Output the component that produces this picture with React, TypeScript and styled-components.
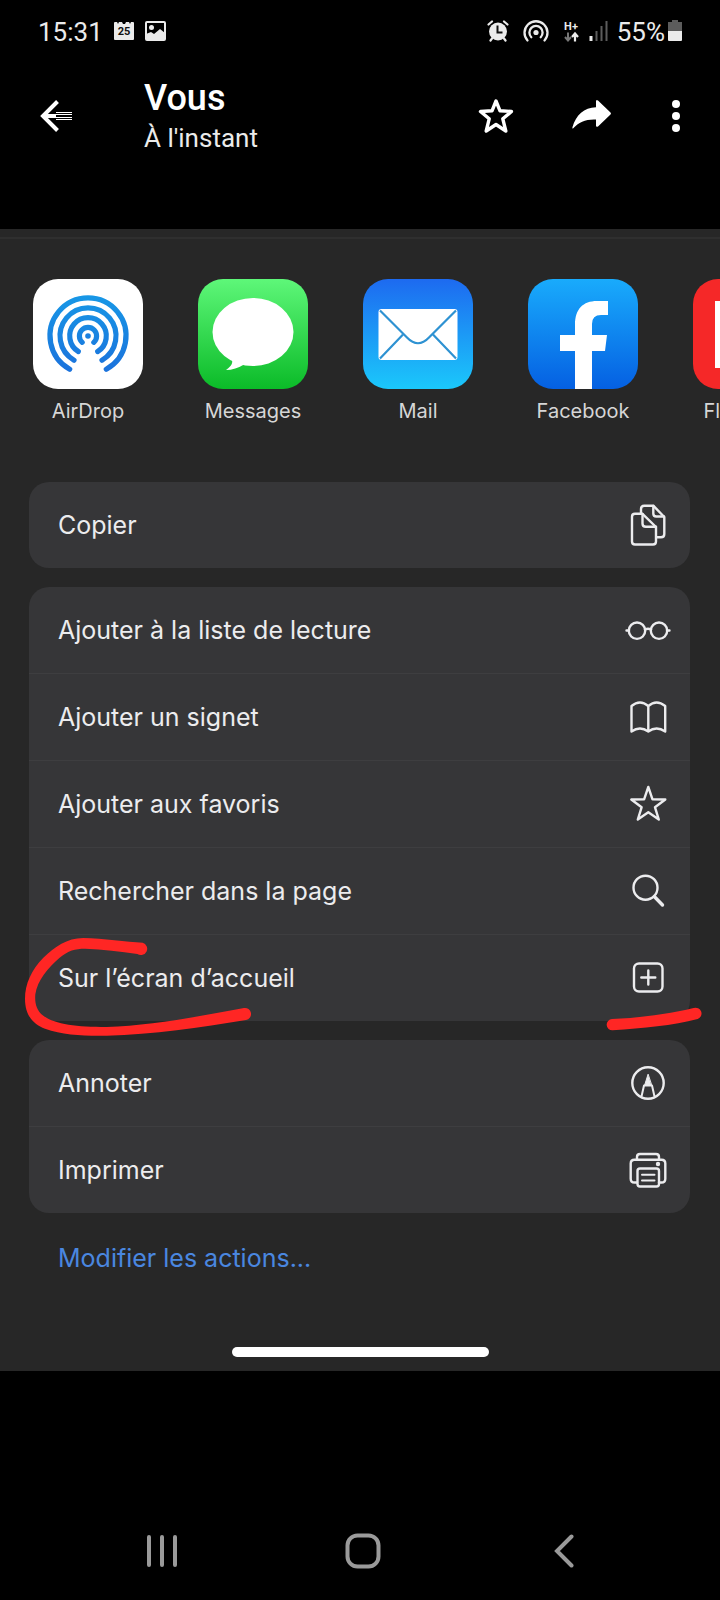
import React from "react";
import styled, { createGlobalStyle } from "styled-components";

const GlobalStyle = createGlobalStyle`
  *, *::before, *::after { box-sizing: border-box; }
  body { margin: 0; background: #000; }
  button { font: inherit; color: inherit; background: none; border: 0; padding: 0; cursor: pointer; }
`;

const RED = "#ff2624";

/* ---------- layout ---------- */

const Page = styled.div`
  display: flex;
  flex-direction: column;
  min-height: 100vh;
  overflow-x: hidden;
  background: #000;
  color: #fff;
  font-family: Roboto, "Liberation Sans", sans-serif;
`;

const StatusBar = styled.div`
  display: flex;
  align-items: center;
  justify-content: space-between;
  height: 62px;
  padding: 0 38px;
  color: #ebebeb;
  font-size: 26px;
  line-height: 32px;
`;

const StatusGroup = styled.div<{ $gap: number }>`
  display: flex;
  align-items: center;
  gap: ${(p) => p.$gap}px;
`;

const StatusText = styled.span`
  padding-top: 2px;
`;

const Header = styled.header`
  display: flex;
  align-items: center;
  padding: 14px 8px 73px 28px;
`;

const HeaderButton = styled.button<{ $width: number }>`
  display: flex;
  align-items: center;
  justify-content: center;
  width: ${(p) => p.$width}px;
  height: 56px;
`;

const Heading = styled.div`
  flex: 1;
  padding-left: 60px;
`;

const Title = styled.h1`
  margin: 0;
  font-size: 36px;
  font-weight: 500;
  line-height: 44px;
`;

const Subtitle = styled.p`
  margin: 0;
  color: #ebebeb;
  font-size: 26px;
  line-height: 36px;
`;

const Sheet = styled.main`
  padding: 8px 0 14px;
  background: #272727;
  color: #ececee;
  font-family: Inter, "Liberation Sans", sans-serif;
`;

const SheetDivider = styled.div`
  height: 2px;
  margin-bottom: 40px;
  background: #2f2f2f;
`;

const AppRow = styled.div`
  display: flex;
  gap: 55px;
  padding-left: 33px;
  overflow: hidden;
`;

const AppButton = styled.button`
  display: flex;
  flex: none;
  flex-direction: column;
  align-items: center;
  gap: 8px;
  width: 110px;
  color: #d6d6d6;
  font-size: 20px;
  line-height: 28px;
`;

const AppTile = styled.span<{ $fill: string }>`
  display: block;
  width: 110px;
  height: 110px;
  overflow: hidden;
  border-radius: 25px;
  background: ${(p) => p.$fill};

  svg { display: block; width: 100%; height: 100%; }
`;

const Groups = styled.div`
  display: flex;
  flex-direction: column;
  gap: 19px;
  margin: 57px 30px 0 29px;
`;

const Card = styled.ul`
  margin: 0;
  padding: 0;
  list-style: none;
  border-radius: 20px;
  background: #363638;
`;

const CardItem = styled.li`
  position: relative;

  & + & { border-top: 1px solid #3e3e40; }
`;

const ActionButton = styled.button`
  display: flex;
  align-items: center;
  justify-content: space-between;
  width: 100%;
  height: 86px;
  padding: 0 18px 0 29px;
  font-size: 25px;
  line-height: 32px;
  text-align: left;
`;

const EditLink = styled.a`
  display: flex;
  align-items: center;
  height: 90px;
  padding-left: 58px;
  color: #4a87e0;
  font-size: 25px;
  line-height: 32px;
  text-decoration: none;
`;

const HomeIndicator = styled.div`
  width: 257px;
  height: 10px;
  margin: 44px auto 0;
  border-radius: 5px;
  background: #fff;
`;

const NavBar = styled.nav`
  display: grid;
  grid-template-columns: repeat(3, 1fr);
  margin-top: auto;
  padding: 0 55px 0 61px;
`;

const NavButton = styled.button`
  display: flex;
  align-items: center;
  justify-content: center;
  height: 98px;
`;

const CircleMark = styled.svg`
  position: absolute;
  top: 2px;
  left: -5px;
  pointer-events: none;
`;

const UnderlineMark = styled.svg`
  position: absolute;
  right: -13px;
  bottom: -11px;
  pointer-events: none;
`;

/* ---------- status icons ---------- */

const CalendarIcon = () => (
  <svg width="20" height="20" viewBox="0 0 20 20">
    <path d="M1 1h2l1 2 1-2h3l1 2h2l1-2h3l1 2 1-2h2q1 0 1 1v16q0 1-1 1H1q-1 0-1-1V2q0-1 1-1Z" fill="#ebebeb" />
    <text x="10" y="14" textAnchor="middle" fontSize="11" fontWeight="700" fill="#111">25</text>
  </svg>
);

const PictureIcon = () => (
  <svg width="21" height="20" viewBox="0 0 21 20">
    <rect x="1" y="1" width="19" height="18" rx="1" fill="none" stroke="#ebebeb" strokeWidth="2" />
    <circle cx="6.500" cy="6.500" r="2.500" fill="#ebebeb" />
    <path d="M1 13l5-2 3 2 6-5 5 4v7H1Z" fill="#ebebeb" />
  </svg>
);

const AlarmIcon = () => (
  <svg width="22" height="22" viewBox="0 0 22 22">
    <circle cx="11" cy="11.500" r="9" fill="#ebebeb" />
    <path d="M1.500 4.500l3.500-3M20.500 4.500l-3.500-3M5 18.500l-1.500 2M17 18.500l1.500 2" stroke="#ebebeb" strokeWidth="2.200" strokeLinecap="round" />
    <path d="M10.500 5.500v7h5" fill="none" stroke="#111" strokeWidth="2" />
  </svg>
);

const HotspotIcon = () => (
  <svg width="26" height="24" viewBox="0 0 26 24" fill="none" stroke="#ebebeb" strokeWidth="2.300" strokeLinecap="round">
    <path d="M4.500 21.500A11.500 11.500 0 1 1 21.500 21.500" />
    <path d="M8.300 18.200A6.600 6.600 0 1 1 17.700 18.200" />
    <circle cx="13" cy="13.500" r="2.600" fill="#ebebeb" stroke="none" />
  </svg>
);

const DataIcon = () => (
  <svg width="17" height="26" viewBox="0 0 17 26">
    <text x="8" y="12" textAnchor="middle" fontSize="11" fontWeight="700" fill="#ebebeb">H+</text>
    <path d="M5 14.500v7M2 19l3 3.500L8 19" fill="none" stroke="#777" strokeWidth="2" />
    <path d="M12 23.500v-7M9 19l3-3.500 3 3.500" fill="none" stroke="#ebebeb" strokeWidth="2.200" />
  </svg>
);

const SignalIcon = () => (
  <svg width="19" height="20" viewBox="0 0 19 20">
    <path d="M2 15v5" stroke="#ebebeb" strokeWidth="3" />
    <path d="M7.500 10v10M12.500 5v15M17.500 0v20" stroke="#5c5c5c" strokeWidth="2" />
  </svg>
);

const BatteryIcon = () => (
  <svg width="14" height="22" viewBox="0 0 14 22">
    <path d="M4 0h6v2h4v9H0V2h4Z" fill="#5c5c5c" />
    <path d="M0 11h14v9q0 1-1 1H1q-1 0-1-1Z" fill="#ebebeb" />
  </svg>
);

/* ---------- header icons ---------- */

const BackIcon = () => (
  <svg width="32" height="32" viewBox="0 0 32 32">
    <path d="M17.500 1.500L3 16l14.500 14.500" fill="none" stroke="#fff" strokeWidth="4" />
    <path d="M2 16h14" stroke="#fff" strokeWidth="4" />
    <path d="M16 12.500h16M16 14.500h16M16 17.500h16M16 19.500h16" stroke="#fff" />
  </svg>
);

const HeaderStarIcon = () => (
  <svg width="36" height="38" viewBox="0 0 36 38">
    <path
      d="M18 4L22 13.800L33.500 14.500L24.800 21.800L27.800 34L18 27.500L8.200 34L11.200 21.800L2.500 14.500L14 13.800Z"
      fill="none" stroke="#fff" strokeWidth="3.400" strokeLinejoin="round"
    />
  </svg>
);

const ShareIcon = () => (
  <svg width="40" height="34" viewBox="0 0 40 34">
    <path
      d="M24 2.500Q24 0 26 1.500L38.500 13.500Q39.500 14.500 38.500 15.500L26 27.500Q24 28.500 24 26.500V20.500C14 20 7 23 1 29.500Q0 30 .5 28C4 16 12 8.500 24 8.200Z"
      fill="#fff"
    />
  </svg>
);

const MoreIcon = () => (
  <svg width="8" height="32" viewBox="0 0 8 32" fill="#fff">
    <circle cx="4" cy="4" r="4" />
    <circle cx="4" cy="16" r="4" />
    <circle cx="4" cy="28" r="4" />
  </svg>
);

/* ---------- app logos ---------- */

const AirDropLogo = () => (
  <svg viewBox="0 0 110 110">
    <defs>
      <linearGradient id="airdrop" gradientUnits="userSpaceOnUse" x1="0" y1="17" x2="0" y2="92">
        <stop offset="0" stopColor="#1797e6" />
        <stop offset="1" stopColor="#1b72dc" />
      </linearGradient>
    </defs>
    <g fill="none" stroke="url(#airdrop)" strokeWidth="5.200" strokeLinecap="round">
      <path d="M36.700 90.200A38 38 0 1 1 73.300 90.200" />
      <path d="M41 81.200A28 28 0 1 1 69 81.200" />
      <path d="M45.300 72.500A18.300 18.300 0 1 1 64.700 72.500" />
      <path d="M49.200 63.300A8.600 8.600 0 1 1 60.800 63.300" />
    </g>
    <circle cx="55" cy="57" r="2.800" fill="#1b80e0" />
  </svg>
);

const MessagesLogo = () => (
  <svg viewBox="0 0 110 110">
    <ellipse cx="55" cy="53" rx="40.500" ry="34" fill="#fff" />
    <path d="M32 78Q38 84 28 91Q37 91 47 85Z" fill="#fff" />
  </svg>
);

const MailLogo = () => (
  <svg viewBox="0 0 110 110">
    <rect x="15.500" y="30" width="79" height="51" rx="3" fill="#fff" />
    <g fill="none" stroke="#2e92d2" strokeWidth="2.200">
      <path d="M17 31.500L44 58.500Q55 70 66 58.500L93 31.500" />
      <path d="M17 79.500L40 55.500M93 79.500L70 55.500" />
    </g>
  </svg>
);

const FacebookLogo = () => (
  <svg viewBox="0 0 110 110">
    <path
      d="M47 110V72H32V56H47V46C47 30 55 22 69 22H80V36H73Q64 36 64 45V56H79L77 72H64V110Z"
      fill="#fff"
    />
  </svg>
);

const FlipboardLogo = () => (
  <svg viewBox="0 0 110 110">
    <path d="M22 22H89V44H67V66H44V89H22Z" fill="#fff" />
  </svg>
);

/* ---------- action icons ---------- */

const LineIcon = ({ children }: { children: React.ReactNode }) => (
  <svg
    width="48" height="48" viewBox="0 0 48 48"
    fill="none" stroke="#ececee" strokeWidth="2.400"
    strokeLinecap="round" strokeLinejoin="round"
  >
    {children}
  </svg>
);

const CopyIcon = () => (
  <LineIcon>
    <path d="M11 12.800h7.500L32 26v14.500q0 3-3 3H11q-3 0-3-3V15.800q0-3 3-3Z" />
    <path d="M18.500 13v9.500q0 3.300 3.300 3.300H32" />
    <path d="M17 12.500V8q0-3.300 3.300-3.300h9L40.300 16v17q0 3.300-3.300 3.300h-4.500" />
    <path d="M29.300 5v7.500q0 3 3 3H40" />
  </LineIcon>
);

const GlassesIcon = () => (
  <LineIcon>
    <circle cx="13" cy="24.700" r="8.200" />
    <circle cx="35" cy="24.700" r="8.200" />
    <path d="M21 23.500q3-1.500 6 0M2.500 24.500H5M43 24.500h2.500" />
  </LineIcon>
);

const BookIcon = () => (
  <LineIcon>
    <path d="M24.300 13Q16 6 7.500 13V38.500Q16 32.500 24.300 38.500Q32.500 32.500 41.200 38.500V13Q32.500 6 24.300 13V38.500" />
  </LineIcon>
);

const StarIcon = () => (
  <LineIcon>
    <path d="M24.300 7L28.500 19.300L41.300 19.500L31 27.300L34.800 39.500L24.300 32.300L13.800 39.500L17.600 27.300L7.300 19.500L20.100 19.300Z" />
  </LineIcon>
);

const SearchIcon = () => (
  <LineIcon>
    <circle cx="21.500" cy="20.700" r="12" />
    <path d="M30.500 29.700l8 8.300" strokeWidth="3.400" />
  </LineIcon>
);

const AddIcon = () => (
  <LineIcon>
    <rect x="10" y="9.500" width="28.500" height="28" rx="5" />
    <path d="M24.300 16.500v14M17.300 23.500h14" />
  </LineIcon>
);

const MarkupIcon = () => (
  <LineIcon>
    <circle cx="24" cy="24" r="15.700" />
    <path d="M17.500 37.500L20 26.500H28L30.500 37.500" strokeWidth="2" />
    <path d="M24 15.500L20.500 26.500H27.500Z" fill="#ececee" strokeWidth="1" />
  </LineIcon>
);

const PrinterIcon = () => (
  <LineIcon>
    <path d="M13 36.500H10.500q-3.800 0-3.800-3.800V17.500q0-3.800 3.800-3.800h27q3.800 0 3.800 3.800v15.200q0 3.800-3.800 3.800H35" />
    <path d="M13 13.500V11q0-3 3-3h16q3 0 3 3v2.500" />
    <rect x="13.500" y="22.500" width="21.500" height="18" rx="2.500" />
    <path d="M18 28.700h12.500M18 34.500h12.500" strokeWidth="2" />
    <circle cx="34" cy="18" r="2.200" fill="#ececee" stroke="none" />
  </LineIcon>
);

/* ---------- data ---------- */

const apps = [
  { name: "AirDrop", fill: "#fff", Logo: AirDropLogo },
  { name: "Messages", fill: "linear-gradient(#5ef779, #0bbb28)", Logo: MessagesLogo },
  { name: "Mail", fill: "linear-gradient(#1d6af0, #1bc8fb)", Logo: MailLogo },
  { name: "Facebook", fill: "linear-gradient(#19abfc, #0560e2)", Logo: FacebookLogo },
  { name: "Flipboard", fill: "#f52828", Logo: FlipboardLogo },
];

const groups = [
  [{ label: "Copier", Icon: CopyIcon }],
  [
    { label: "Ajouter à la liste de lecture", Icon: GlassesIcon },
    { label: "Ajouter un signet", Icon: BookIcon },
    { label: "Ajouter aux favoris", Icon: StarIcon },
    { label: "Rechercher dans la page", Icon: SearchIcon },
    { label: "Sur l’écran d’accueil", Icon: AddIcon, marked: true },
  ],
  [
    { label: "Annoter", Icon: MarkupIcon },
    { label: "Imprimer", Icon: PrinterIcon },
  ],
];

/* Hand-drawn highlight around the start and under the end of a row. */
const Highlight = () => (
  <>
    <CircleMark width="227" height="100" viewBox="72 50 681 300" aria-hidden="true">
      <path
        d="M428 67C380 66 310 53 250 53C200 53 165 80 130 112C95 148 75 190 75 235C75 285 100 312 135 325C190 344 250 347 320 346C460 342 600 322 738 299A18 18 0 0 0 732 263C600 288 450 316 320 320C230 320 165 312 130 286C108 270 104 245 106 222C112 180 145 142 178 113C205 90 225 85 255 85C310 87 360 94 412 101A19 19 0 1 0 428 67Z"
        fill={RED}
      />
    </CircleMark>
    <UnderlineMark width="98" height="26" viewBox="76 738 294 78" aria-hidden="true">
      <path d="M97 777C180 774 270 761 342 744A17 17 0 0 1 354 777C280 797 190 804 99 811A17 17 0 0 1 97 777Z" fill={RED} />
    </UnderlineMark>
  </>
);

export default function App() {
  return (
    <Page>
      <GlobalStyle />
      <StatusBar>
        <StatusGroup $gap={11}>
          <StatusText>15:31</StatusText>
          <CalendarIcon />
          <PictureIcon />
        </StatusGroup>
        <StatusGroup $gap={14}>
          <AlarmIcon />
          <HotspotIcon />
          <StatusGroup $gap={9}>
            <DataIcon />
            <SignalIcon />
            <StatusGroup $gap={3}>
              <StatusText>55%</StatusText>
              <BatteryIcon />
            </StatusGroup>
          </StatusGroup>
        </StatusGroup>
      </StatusBar>

      <Header>
        <HeaderButton $width={56} aria-label="Retour"><BackIcon /></HeaderButton>
        <Heading>
          <Title>Vous</Title>
          <Subtitle>À l'instant</Subtitle>
        </Heading>
        <HeaderButton $width={96} aria-label="Favori"><HeaderStarIcon /></HeaderButton>
        <HeaderButton $width={96} aria-label="Transférer"><ShareIcon /></HeaderButton>
        <HeaderButton $width={72} aria-label="Plus"><MoreIcon /></HeaderButton>
      </Header>

      <Sheet>
        <SheetDivider />
        <AppRow>
          {apps.map(({ name, fill, Logo }) => (
            <AppButton key={name}>
              <AppTile $fill={fill}><Logo /></AppTile>
              {name}
            </AppButton>
          ))}
        </AppRow>
        <Groups>
          {groups.map((group) => (
            <Card key={group[0].label}>
              {group.map(({ label, Icon, ...rest }) => (
                <CardItem key={label}>
                  <ActionButton>
                    {label}
                    <Icon />
                  </ActionButton>
                  {"marked" in rest && <Highlight />}
                </CardItem>
              ))}
            </Card>
          ))}
        </Groups>
        <EditLink href="#actions">Modifier les actions...</EditLink>
        <HomeIndicator />
      </Sheet>

      <NavBar>
        <NavButton aria-label="Applications récentes">
          <svg width="32" height="34" viewBox="0 0 32 34" stroke="#9a9a9a" strokeWidth="4" strokeLinecap="round">
            <path d="M3 3v28M16 3v28M29 3v28" />
          </svg>
        </NavButton>
        <NavButton aria-label="Accueil">
          <svg width="36" height="36" viewBox="0 0 36 36" fill="none" stroke="#9a9a9a" strokeWidth="4">
            <rect x="2.500" y="2.500" width="31" height="31" rx="10" />
          </svg>
        </NavButton>
        <NavButton aria-label="Précédent">
          <svg width="20" height="34" viewBox="0 0 20 34" fill="none" stroke="#9a9a9a" strokeWidth="4" strokeLinecap="round">
            <path d="M17.500 2.500L3 17l14.500 14.500" />
          </svg>
        </NavButton>
      </NavBar>
    </Page>
  );
}
